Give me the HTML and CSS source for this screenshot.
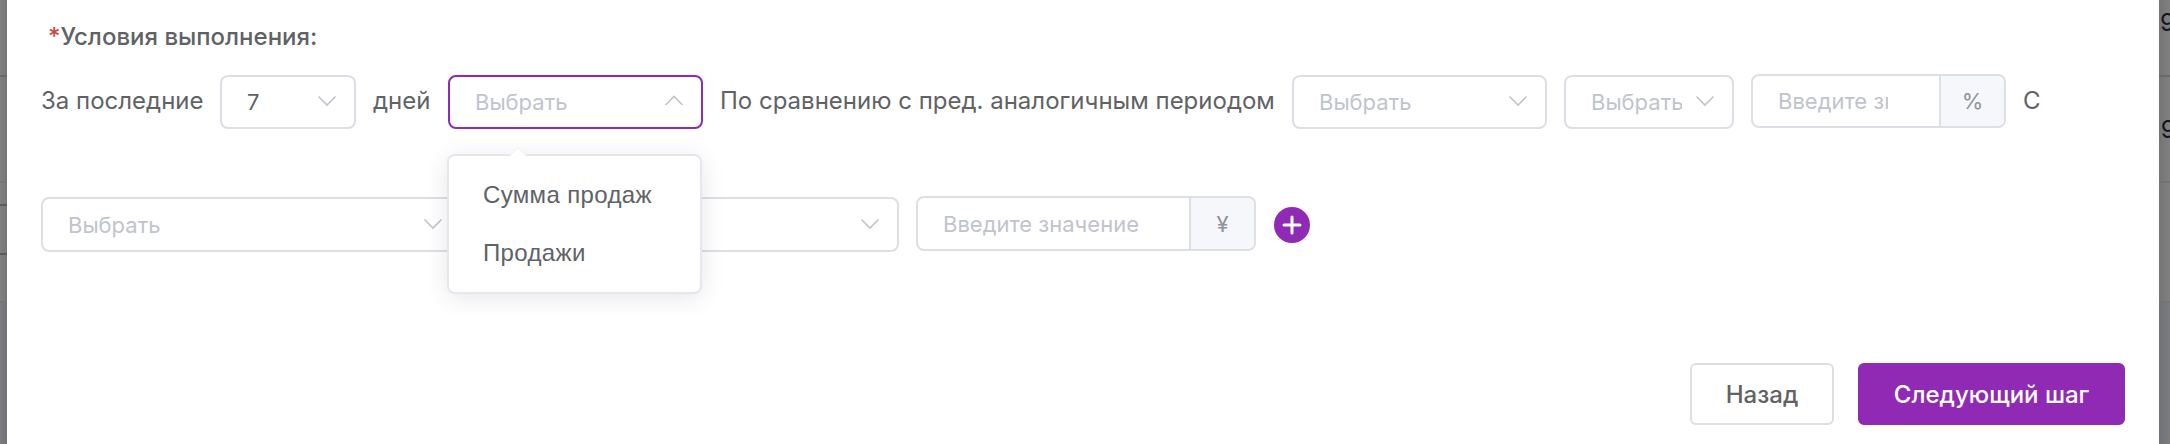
FILE: index.html
```html
<!DOCTYPE html>
<html lang="ru">
<head>
<meta charset="utf-8">
<title>Условия выполнения</title>
<link rel="stylesheet" href="styles.css">
</head>
<body>
<div class="page">
  <div class="backdrop backdrop-left">
    <div class="cell cell-a"></div>
    <div class="cell cell-b"></div>
    <div class="cell cell-c"></div>
    <div class="cell cell-d"></div>
    <div class="cell cell-e"></div>
  </div>
  <main class="dialog">
    <h2 class="title"><span class="required">*</span>Условия выполнения:</h2>
    <div class="row row-first">
      <span class="label label-last">За последние</span>
      <div class="select select-days"><span class="value">7</span><svg class="arrow" viewBox="0 0 20 12"><path d="M1.5 1.5 10 10 18.5 1.5"/></svg></div>
      <span class="label label-days">дней</span>
      <div class="select select-metric active"><span class="placeholder">Выбрать</span><svg class="arrow" viewBox="0 0 20 12"><path d="M1.5 10 10 1.5 18.5 10"/></svg>
        <div class="menu">
          <svg class="menu-tip" viewBox="0 0 20 11"><path class="tip-fill" d="M0 11 10 1 20 11Z"/><path class="tip-line" d="M0.5 9.5 10 0.5 19.5 9.5"/></svg>
          <div class="option">Сумма продаж</div>
          <div class="option">Продажи</div>
        </div>
      </div>
      <span class="label label-compare">По сравнению с пред. аналогичным периодом</span>
      <div class="select select-metric"><span class="placeholder">Выбрать</span><svg class="arrow" viewBox="0 0 20 12"><path d="M1.5 1.5 10 10 18.5 1.5"/></svg></div>
      <div class="select select-sign"><span class="placeholder">Выбрать</span><svg class="arrow" viewBox="0 0 20 12"><path d="M1.5 1.5 10 10 18.5 1.5"/></svg></div>
      <div class="group group-percent"><div class="field"><span class="placeholder">Введите значение</span></div><div class="unit">%</div></div>
      <span class="label">С</span>
    </div>
    <div class="row row-second">
      <div class="select select-wide"><span class="placeholder">Выбрать</span><svg class="arrow" viewBox="0 0 20 12"><path d="M1.5 1.5 10 10 18.5 1.5"/></svg></div>
      <div class="select select-wide"><span class="placeholder">Выбрать</span><svg class="arrow" viewBox="0 0 20 12"><path d="M1.5 1.5 10 10 18.5 1.5"/></svg></div>
      <div class="group group-money"><div class="field"><span class="placeholder">Введите значение</span></div><div class="unit">¥</div></div>
      <svg class="add" viewBox="0 0 36 36"><circle cx="18" cy="18" r="18"/><path d="M10 18H26M18 10V26"/></svg>
    </div>
    <div class="footer">
      <button class="button back">Назад</button>
      <button class="button next">Следующий шаг</button>
    </div>
  </main>
  <div class="backdrop backdrop-right">
    <div class="cell cell-a"><span class="digit">9</span></div>
    <div class="cell cell-b"><span class="digit">19</span></div>
    <div class="cell cell-f"></div>
  </div>
</div>
</body>
</html>
```

FILE: styles.css
```css
* { box-sizing: border-box; }

body {
  margin: 0;
  font-family: Inter, "Liberation Sans", sans-serif;
  font-size: 24px;
  color: #606266;
}

.page {
  display: flex;
  width: 2170px;
  height: 444px;
  overflow: hidden;
  background: #77797c;
}

.backdrop { flex: none; overflow: hidden; }
.backdrop-left { width: 7px; background: linear-gradient(90deg, transparent, rgba(0, 0, 0, .08)), #7a7c7f; }
.backdrop-right { width: 11px; background: linear-gradient(270deg, transparent, rgba(0, 0, 0, .08)), #7a7c7f; }

.cell {
  display: flex;
  align-items: center;
  border-bottom: 2px solid #747474;
}
.backdrop-left .cell { background: linear-gradient(90deg, #808080, #757575); }
.backdrop-right .cell { background: linear-gradient(270deg, #808080, #757575); }
.cell-a { height: 77px; border-color: #696969; }
.cell-b { height: 106px; }
.cell-c { height: 23px; border-color: #5a5a5a; }
.cell-d { height: 49px; border-color: #5a5a5a; }
.cell-e { height: 48px; }
.cell-f { height: 120px; }
.backdrop-right .cell-a { align-items: flex-start; padding-top: 8px; }
.digit { margin-left: 1px; line-height: 29px; color: #15151f; }
.cell-b .digit { margin-left: -8px; }

.dialog {
  flex: none;
  width: 2152px;
  height: 444px;
  padding: 0 34px;
  background: #fff;
}

.title {
  height: 29px;
  margin: 22px 0 0 7px;
  font-size: 24px;
  font-weight: 500;
  line-height: 29px;
  white-space: nowrap;
}
.required { color: #cf4444; }

.row { display: flex; align-items: center; gap: 17px; }
.row-first { height: 54px; margin-top: 24px; }
.row-second { height: 55px; margin-top: 68px; }

.label { flex: none; white-space: nowrap; line-height: 52px; height: 54px; }
.label-last { width: 162px; }
.label-days { width: 58px; }
.label-compare { width: 555px; }

.select {
  position: relative;
  display: flex;
  flex: none;
  align-items: center;
  justify-content: space-between;
  height: 54px;
  padding: 0 17px 0 25px;
  border: 2px solid #dcdfe6;
  border-radius: 8px;
  background: #fff;
  font-size: 22px;
}
.active { border-color: #902ab5; }
.select-days { width: 136px; }
.select-metric { width: 255px; }
.select-sign { width: 170px; }
.select-wide { width: 420.5px; height: 55px; }

.placeholder { color: #c0c4cc; white-space: nowrap; overflow: hidden; line-height: 30px; }
.select-sign .placeholder { width: 91px; flex: none; }

.arrow {
  flex: none;
  width: 20px;
  height: 12px;
  margin-top: -2px;
  fill: none;
  stroke: #c0c4cc;
  stroke-width: 1.6;
}

.group {
  display: flex;
  flex: none;
  height: 55px;
  overflow: hidden;
  border: 2px solid #dcdfe6;
  border-radius: 8px;
  font-size: 22px;
}
.row-first .group { height: 54px; margin-top: -2px; }
.row-second .group { margin-top: -2px; }
.group-percent { width: 255px; }
.group-money { width: 340px; }
.field { display: flex; flex: 1; min-width: 0; align-items: center; padding: 0 25px; }
.group-percent .field { padding-right: 51px; }
.unit {
  display: flex;
  width: 65px;
  align-items: center;
  justify-content: center;
  border-left: 2px solid #dcdfe6;
  background: #f5f7fa;
  color: #909399;
}

.add { flex: none; width: 36px; height: 36px; margin-left: 1px; fill: #902ab5; }
.add path { stroke: #fff; stroke-width: 3; stroke-linecap: round; }

/* Dropdown floating below the active select */
.menu {
  position: absolute;
  z-index: 2;
  top: 77px;
  left: -3px;
  width: 255px;
  height: 140px;
  padding: 10px 0 8px;
  border: 2px solid #e4e7ed;
  border-radius: 8px;
  background: #fff;
  box-shadow: 0 4px 24px rgba(0, 0, 0, .1);
}
.menu-tip { position: absolute; top: -9px; left: 59px; width: 20px; height: 11px; }
.tip-fill { fill: #fff; }
.tip-line { fill: none; stroke: #ebeef5; }
.option {
  height: 58px;
  padding-left: 34px;
  font-family: "Liberation Sans", Arial, sans-serif;
  font-size: 24px;
  letter-spacing: .35px;
  line-height: 58px;
}

.footer { display: flex; justify-content: flex-end; gap: 24px; margin-top: 111px; }
.button {
  height: 62px;
  padding: 0;
  border: 2px solid #dcdfe6;
  border-radius: 6px;
  background: #fff;
  color: #606266;
  font: 500 24px Inter, "Liberation Sans", sans-serif;
}
.back { width: 144px; }
.next { width: 267px; border-color: #902ab5; background: #902ab5; color: #fff; }
```
